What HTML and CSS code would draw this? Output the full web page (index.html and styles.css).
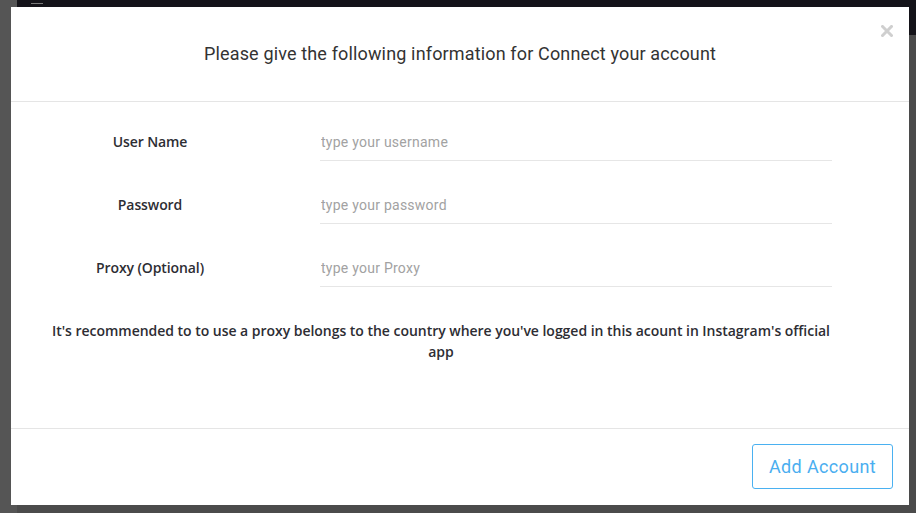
FILE: index.html
```html
<!DOCTYPE html>
<html lang="en">
<head>
<meta charset="utf-8">
<title>Connect your account</title>
<link rel="stylesheet" href="styles.css">
</head>
<body>
<div class="page">
  <aside class="sidebar"></aside>
  <div class="main">
    <header class="navbar">
      <span class="burger"></span>
    </header>
  </div>
</div>

<div class="modal">
  <button class="close" type="button" aria-label="Close">
    <svg width="12" height="12" viewBox="0 0 12 12"><path d="M1.5 1.5 L10.5 10.5 M10.5 1.5 L1.5 10.5" stroke="#cfcfcf" stroke-width="3" stroke-linecap="square"/></svg>
  </button>
  <div class="modal-header">
    <h4 class="modal-title">Please give the following information for Connect your account</h4>
  </div>
  <div class="modal-body">
    <div class="form-row">
      <label class="form-label">User Name</label>
      <input class="form-input" type="text" placeholder="type your username">
    </div>
    <div class="form-row">
      <label class="form-label">Password</label>
      <input class="form-input" type="password" placeholder="type your password">
    </div>
    <div class="form-row">
      <label class="form-label">Proxy (Optional)</label>
      <input class="form-input" type="text" placeholder="type your Proxy">
    </div>
    <p class="note">It's recommended to to use a proxy belongs to the country where you've logged in this acount in Instagram's official app</p>
  </div>
  <div class="modal-footer">
    <button class="btn-add" type="button">Add Account</button>
  </div>
</div>
</body>
</html>
```

FILE: styles.css
```css
* { box-sizing: border-box; }

html, body {
  margin: 0;
  padding: 0;
  width: 916px;
  height: 513px;
  overflow: hidden;
  font-family: "Roboto", "Liberation Sans", sans-serif;
}

body { background: #4a4a4a; }

.page {
  display: flex;
  height: 513px;
}

.sidebar {
  width: 17px;
  background: #555555;
  flex: none;
}

.main {
  flex: 1;
  background: #4b4b4b;
}

.navbar {
  height: 35px;
  background: #141319;
  padding-left: 14px;
}

.burger {
  display: block;
  width: 12px;
  height: 4px;
  border-bottom: 1px solid #7a7a7a;
  box-shadow: 0 -3px 0 -2px #7a7a7a;
}

.modal {
  position: absolute;
  left: 11px;
  top: 7px;
  width: 898px;
  height: 498px;
  background: #ffffff;
  display: flex;
  flex-direction: column;
}

.close {
  position: absolute;
  right: 16px;
  top: 18px;
  border: 0;
  background: none;
  padding: 0;
  width: 12px;
  height: 12px;
  line-height: 0;
  cursor: pointer;
}

.modal-header {
  height: 95px;
  border-bottom: 1px solid #e5e5e5;
  display: flex;
  align-items: center;
  justify-content: center;
  padding-bottom: 1px;
}

.modal-title {
  margin: 0;
  font-family: "Roboto", sans-serif;
  font-weight: 400;
  font-size: 18px;
  line-height: 24px;
  color: #333333;
  letter-spacing: 0.15px;
}

.modal-body {
  flex: 1;
  padding: 24px 0 0 39px;
}

.form-row {
  display: grid;
  grid-template-columns: 200px 512px;
  column-gap: 70px;
  align-items: center;
  margin-bottom: 28px;
}

.form-label {
  text-align: center;
  font-family: "Open Sans", "Roboto", sans-serif;
  font-weight: 600;
  font-size: 14px;
  letter-spacing: -0.1px;
  color: #2d2d33;
  padding-bottom: 4px;
}

.form-input {
  height: 35px;
  border: 0;
  border-bottom: 1px solid #e6e6e6;
  padding: 0 1px 2px;
  font-family: "Roboto", sans-serif;
  font-size: 14px;
  letter-spacing: 0.25px;
  color: #333;
  outline: none;
  background: transparent;
}

.form-input::placeholder { color: #a2a2a2; }

.note {
  width: 782px;
  margin: 33px 0 0;
  text-align: center;
  font-family: "Open Sans", "Roboto", sans-serif;
  font-weight: 600;
  font-size: 14px;
  letter-spacing: -0.03px;
  line-height: 21px;
  color: #2d2d33;
}

.modal-footer {
  border-top: 1px solid #e5e5e5;
  height: 77px;
  display: flex;
  justify-content: flex-end;
  align-items: flex-start;
  padding: 15px 16px 0 0;
}

.btn-add {
  width: 141px;
  height: 45px;
  border: 1px solid #4ab1f1;
  border-radius: 3px;
  background: #ffffff;
  color: #4aaef0;
  font-family: "Roboto", sans-serif;
  font-size: 18px;
  letter-spacing: 0.35px;
  font-weight: 400;
  padding: 0;
  cursor: pointer;
}
```
